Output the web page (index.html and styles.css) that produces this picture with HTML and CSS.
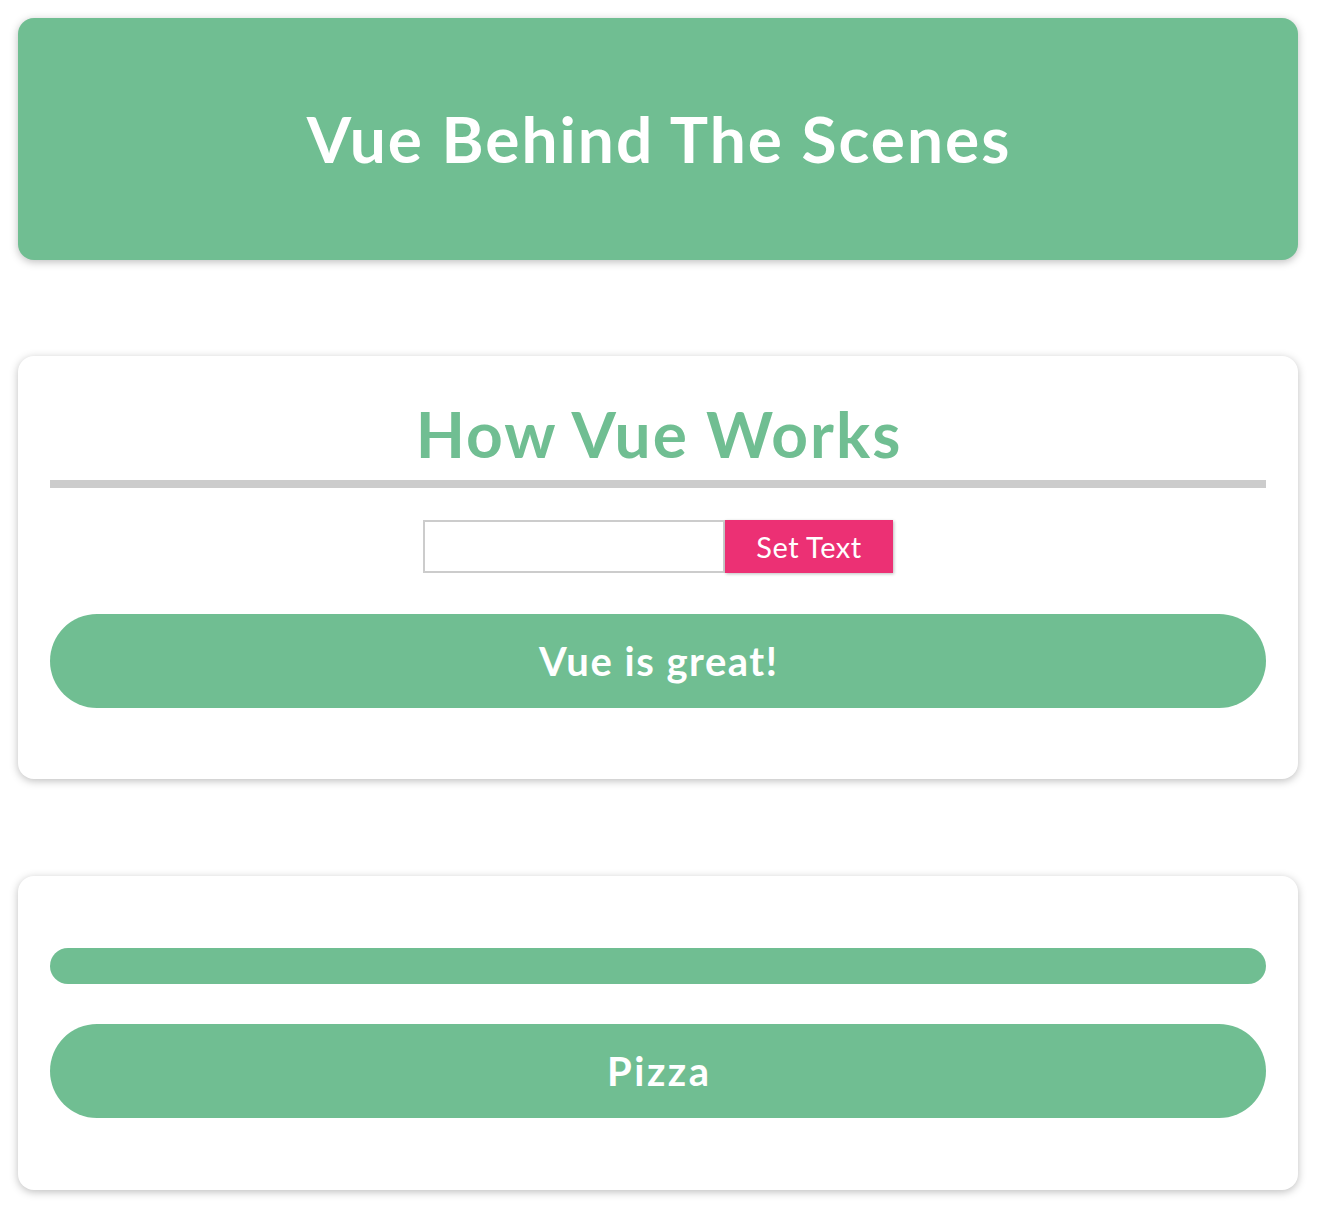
FILE: index.html
```html
<!DOCTYPE html>
<html lang="en">
<head>
<meta charset="utf-8">
<title>Vue Behind The Scenes</title>
<link rel="stylesheet" href="styles.css">
</head>
<body>
  <header class="hero">
    <h1 class="hero-title">Vue Behind The Scenes</h1>
  </header>
  <section class="card card-first">
    <h2 class="card-title">How Vue Works</h2>
    <div class="form-row">
      <input class="text-input" type="text">
      <button class="btn">Set Text</button>
    </div>
    <p class="pill">Vue is great!</p>
  </section>
  <section class="card card-second">
    <p class="bar"></p>
    <p class="pill pill-meal">Pizza</p>
  </section>
</body>
</html>
```

FILE: styles.css
```css
* { box-sizing: border-box; }

html, body {
  margin: 0;
  background: #ffffff;
}

body {
  padding: 18px;
  font-family: "Lato", "Open Sans", sans-serif;
}

.hero,
.card {
  width: 1280px;
}

.hero {
  height: 242px;
  background: #70be92;
  border-radius: 16px;
  box-shadow: 0 2px 8px rgba(0, 0, 0, 0.26);
  display: flex;
  align-items: center;
  justify-content: center;
}

.hero-title {
  margin: 0;
  color: #ffffff;
  font-size: 64px;
  font-weight: 700;
  line-height: 92px;
  letter-spacing: 2px;
  padding-left: 2px;
}

.card {
  background: #ffffff;
  border-radius: 16px;
  box-shadow: 0 2px 8px rgba(0, 0, 0, 0.26);
  padding: 32px;
}

.card-first { margin-top: 96px; }
.card-second { margin-top: 97px; }

.card-title {
  margin: 0;
  color: #70be92;
  font-size: 64px;
  font-weight: 700;
  line-height: 92px;
  letter-spacing: 2px;
  padding-left: 2px;
  text-align: center;
  border-bottom: 8px solid #cccccc;
}

.form-row {
  margin-top: 32px;
  display: flex;
  justify-content: center;
}

.text-input {
  width: 302px;
  height: 53px;
  border: 2px solid #cccccc;
  margin: 0;
  font: inherit;
  font-size: 28px;
  padding: 0 8px;
}

.btn {
  width: 168px;
  height: 53px;
  margin: 0;
  border: 1px solid #ec3074;
  background: #ec3074;
  color: #ffffff;
  font-family: inherit;
  font-size: 29px;
  font-weight: 400;
  letter-spacing: 0.5px;
  box-shadow: 1px 1px 3px rgba(0, 0, 0, 0.26);
  cursor: pointer;
}

.pill {
  margin: 41px 0 39px;
  height: 94px;
  border-radius: 47px;
  background: #70be92;
  color: #ffffff;
  font-size: 40px;
  font-weight: 700;
  letter-spacing: 1.5px;
  padding-left: 1.5px;
  display: flex;
  align-items: center;
  justify-content: center;
}

.card-second .pill { margin: 40px 0 40px; }

.pill-meal {
  letter-spacing: 2.5px;
  padding-left: 2.5px;
}

.bar {
  margin: 40px 0 0;
  height: 36px;
  border-radius: 18px;
  background: #70be92;
}
```
